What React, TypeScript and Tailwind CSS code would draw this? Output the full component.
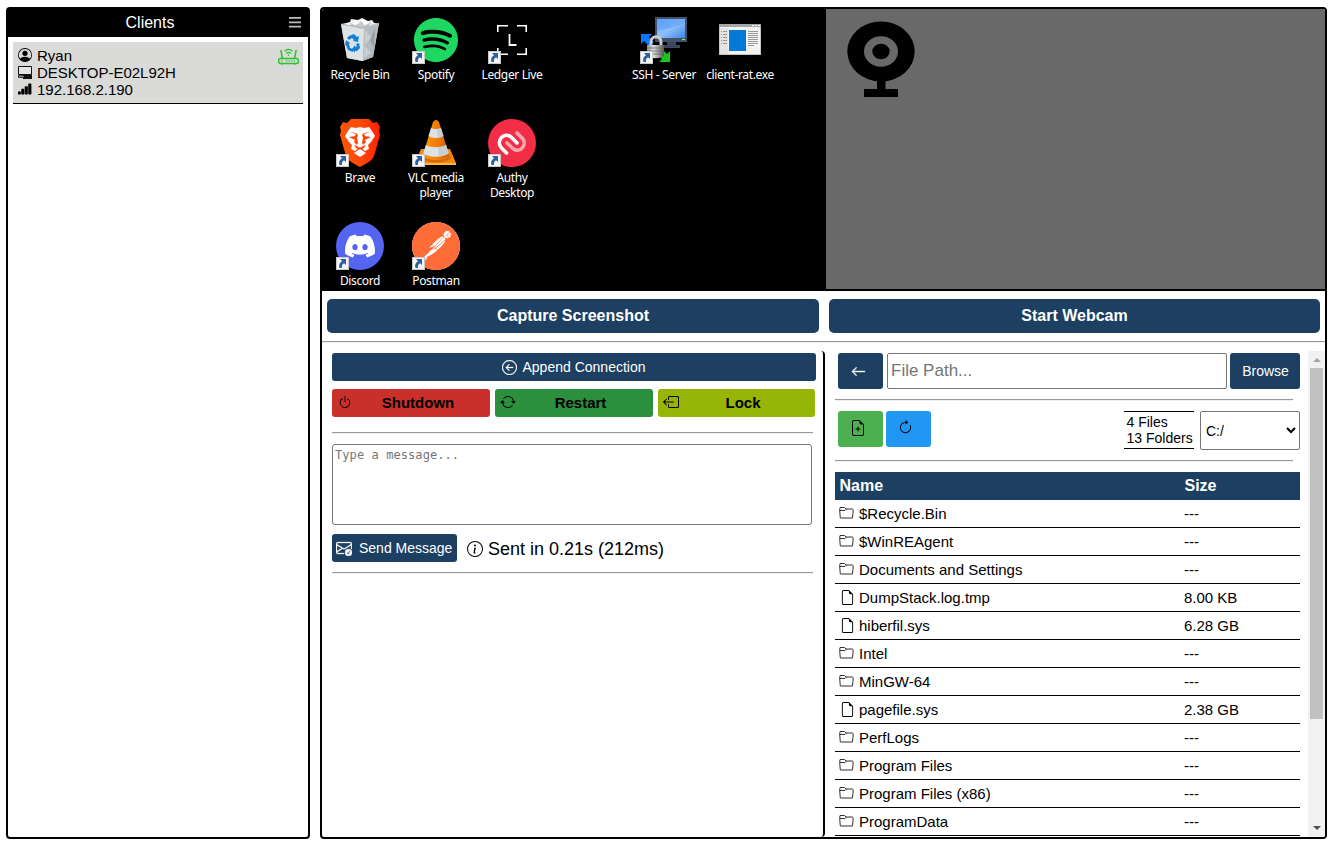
import React from 'react';
import {
  BsPersonCircle,
  BsReception4,
  BsPower,
  BsArrowRepeat,
  BsArrowLeftCircle,
  BsBoxArrowLeft,
  BsArrowLeft,
  BsFileEarmarkPlus,
  BsArrowClockwise,
  BsFileEarmark,
  BsInfoCircle,
  BsEnvelopeCheck,
} from 'react-icons/bs';
import { SiSpotify, SiPostman, SiDiscord } from 'react-icons/si';

const files: { name: string; size?: string }[] = [
  { name: '$Recycle.Bin' },
  { name: '$WinREAgent' },
  { name: 'Documents and Settings' },
  { name: 'DumpStack.log.tmp', size: '8.00 KB' },
  { name: 'hiberfil.sys', size: '6.28 GB' },
  { name: 'Intel' },
  { name: 'MinGW-64' },
  { name: 'pagefile.sys', size: '2.38 GB' },
  { name: 'PerfLogs' },
  { name: 'Program Files' },
  { name: 'Program Files (x86)' },
  { name: 'ProgramData' },
];

function RecycleBin() {
  return (
    <svg viewBox="0 0 48 48" className="size-12">
      <path d="M5 8 43 7 37 41 26 45 11 42Z" fill="#c9cdd0" />
      <path d="M5 8 28 12 27 45 11 42Z" fill="#dfe2e4" />
      <path d="M28 12 43 7 37 41 27 45Z" fill="#b4b9bd" />
      <path d="m29 14 7 8-8 7 7 8-7 5Z" fill="#c9cdd0" />
      <path d="m39 12-5 12 4 8Z" fill="#979da1" />
      <path d="m6 8 8-2 1-3 7 1 4-2 6 3 4-1 2 3 4 1-16 5Z" fill="#f4f5f6" />
      <path d="m14 7 6 2 5-4 4 4 6-3-2 5-8 2-10-3Z" fill="#c5cacd" />
      <path d="m19 4 5 3-6 2Zm8 0 6 3-5 2Z" fill="#fff" />
      <path d="m5 8 22 4 16-5" fill="none" stroke="#9fa4a8" strokeWidth=".8" />
      <g fill="#1080d8">
        <path d="m13 20 5-2 3 3 2-1-1 6-5-1 1-1-2-2-3 2-2-2Z" />
        <path d="m10 24 4 3-1 1 1 4 3 1v3l-5-2-2-5-1 0Z" />
        <path d="m23 27 1 5-3 3-2 0v2l-3-4 3-4v2l2-1-1-2Z" />
      </g>
    </svg>
  );
}

function Spotify() {
  return (
    <span className="flex size-12 items-center justify-center">
      <span className="flex size-11 rounded-full bg-black">
        <SiSpotify className="size-11 text-[#1ed760]" />
      </span>
    </span>
  );
}

function Ledger() {
  return (
    <svg viewBox="0 0 48 48" className="size-12" fill="none" stroke="#fff" strokeWidth="1.6">
      <path d="M20 9.700H9.800V16M29 9.700h9.200V16M9.800 32v6.200H20M38.200 32v6.200H29" />
      <path d="M21.500 18v11h7" strokeWidth="1.800" />
    </svg>
  );
}

function SshServer() {
  return (
    <svg viewBox="0 0 48 48" className="size-12">
      <defs>
        <linearGradient id="screen" x1="0" y1="0" x2="1" y2="1">
          <stop offset="0" stopColor="#5da2f7" />
          <stop offset=".5" stopColor="#8fc0ff" />
          <stop offset="1" stopColor="#3c85e6" />
        </linearGradient>
        <linearGradient id="lock" x1="0" y1="0" x2="1" y2="0">
          <stop offset="0" stopColor="#999" />
          <stop offset=".4" stopColor="#ddd" />
          <stop offset="1" stopColor="#555" />
        </linearGradient>
      </defs>
      <path d="M15 1h32v25H15Z" fill="#44536b" />
      <path d="M17 3h28v19H17Z" fill="url(#screen)" />
      <path d="M17 14c12-1 20-4 28-7V3H17Z" fill="#5c9ff5" opacity=".6" />
      <path d="M27 26h9v3h4v3H23v-3h4Z" fill="#394759" />
      <path d="M42 23h3v1h-3Z" fill="#9ee65b" />
      <path d="M1 18h11l-3 3 5 5-5 4-5-5-3 3Z" fill="#0878ff" />
      <path d="M30 46H19l3-3-4-4 5-5 4 4 3-3Z" fill="#16c51d" />
      <path d="M11 31v-5c0-7 10-7 10 0v5" fill="none" stroke="#ccc" strokeWidth="3" />
      <path d="M7 29h17v11c-4 3-13 3-17 0Z" fill="url(#lock)" />
      <path d="M7 32h17M7 35h17M7 38h17" stroke="#666" strokeWidth=".8" />
    </svg>
  );
}

function ClientExe() {
  return (
    <svg viewBox="0 0 48 48" className="size-12">
      <path d="M3 8h42v31H3Z" fill="#c3c3c3" />
      <path d="M4 11h40v27H4Z" fill="#f3f3f3" />
      <path d="M3 8h42v3H3Z" fill="#a7a7a7" />
      <path d="M36 9h2v1h-2Zm3 0h2v1h-2Zm3 0h2v1h-2Z" fill="#fff" />
      <path d="M4 12h8v26H4Z" fill="#e4e4e4" />
      <path d="M13 14h17v21H13Z" fill="#0579d7" />
      <path d="M5 15.500h1m1 0h4M5 18.500h1m1 0h4M5 21.500h1m1 0h4M5 24.500h1m1 0h4M5 27.500h1m1 0h4" stroke="#999" />
      <path d="M32 15.500h10M32 17.500h10M32 19.500h10M32 21.500h10M32 23.500h10M32 25.500h10M32 27.500h10M32 29.500h6" stroke="#999" />
    </svg>
  );
}

function Brave() {
  return (
    <svg viewBox="0 0 48 48" className="size-12">
      <defs>
        <linearGradient id="brave" x1="0" x2="1">
          <stop offset="0" stopColor="#ff5500" />
          <stop offset=".5" stopColor="#ff4a0a" />
          <stop offset="1" stopColor="#ff2000" />
        </linearGradient>
      </defs>
      <path d="M15 0h18l4 4 4-1 3 5-1 4 1 4-6 21c-1 4-8 8-14 11-6-3-13-7-14-11L4 16l1-4-1-4 3-5 4 1Z" fill="url(#brave)" />
      <path
        d="m15 8 5 1 4-1 4 1 5-1 3 4 3 5-4 6-3 3 1 4-4 2-5-4-5 4-4-2 1-4-3-3-4-6 3-5Z"
        fill="#fff"
      />
      <path d="m13 13 7 1 2 2-1 3 1 5-1 2-3-3 1-2-6-3 6-1 1-2ZM35 13l-7 1-2 2 1 3-1 5 1 2 3-3-1-2 6-3-6-1-1-2ZM18 26l3 1 3 2 3-2 3-1-2 3-4 2-4-2Z" fill="#ff4510" />
      <path d="m18 34 6-4 6 4-6 4Z" fill="#fff" />
    </svg>
  );
}

function Vlc() {
  return (
    <svg viewBox="0 0 48 48" className="size-12">
      <defs>
        <linearGradient id="cone" x1="0" x2="1">
          <stop offset="0" stopColor="#ff9a13" />
          <stop offset=".45" stopColor="#f58202" />
          <stop offset="1" stopColor="#d85d00" />
        </linearGradient>
      </defs>
      <path d="M9 30h29l6 14v2H3v-2Z" fill="#f28a10" />
      <path d="M3 44h41v2H3Z" fill="#ffb43b" />
      <path d="M11 35c2 8 25 8 27 0l1 4c-4 6-25 6-29 0Z" fill="#b95000" opacity=".55" />
      <path d="M21 3q3-4 6 0l10 33c-1 6-25 6-26 0Z" fill="url(#cone)" />
      <path d="M19 9c3 1.500 7 1.500 10 0l2.500 8c-3 2.500-12 2.500-15 0Z" fill="#dde2e5" />
      <path d="M13.800 26c4 3 16 3 20.400 0l2.500 8c-5 5-21 5-25.400 0Z" fill="#dde2e5" />
      <path d="M25 10 29 9l2.500 8-5.500 2ZM26 28l8-2 2.700 8-9.700 4Z" fill="#b9c0c4" opacity=".6" />
    </svg>
  );
}

function Authy() {
  return (
    <svg viewBox="0 0 48 48" className="size-12">
      <circle cx="24" cy="24" r="24" fill="#f22e46" />
      <g fill="none" strokeWidth="3.600" strokeLinecap="round" strokeLinejoin="round">
        <path d="m29 14 5.500 5.500c5 6-2 15-9 10.500L19 24" stroke="#f9a6af" />
        <path d="m18.500 34-5-5c-6-7 2-16 9-11.500L29 24" stroke="#fff" />
      </g>
    </svg>
  );
}

function Discord() {
  return (
    <span className="flex size-12 items-center justify-center rounded-full bg-[#5664f2]">
      <SiDiscord className="size-[30px] text-white" />
    </span>
  );
}

function Postman() {
  return (
    <span className="flex size-12 rounded-full bg-white">
      <SiPostman className="size-12 text-[#ff6c37]" />
    </span>
  );
}

function ShortcutBadge() {
  return (
    <svg viewBox="0 0 13 13" className="absolute bottom-0 left-0 size-[13px]">
      <path d="M0 0h13v13H0Z" fill="#c9c9c9" />
      <path d="M1 1h11v11H1Z" fill="#f6f6f6" />
      <path d="M4 2h6v6L8 6.300C6 7.500 5.700 9 6 11H3.500C2.500 8 3.500 5.700 6 4.200Z" fill="#2e5f9e" />
    </svg>
  );
}

const desktop: { label: string; icon?: () => React.JSX.Element; shortcut?: boolean }[] = [
  { label: 'Recycle Bin', icon: RecycleBin },
  { label: 'Spotify', icon: Spotify, shortcut: true },
  { label: 'Ledger Live', icon: Ledger, shortcut: true },
  { label: '' },
  { label: 'SSH - Server', icon: SshServer, shortcut: true },
  { label: 'client-rat.exe', icon: ClientExe },
  { label: 'Brave', icon: Brave, shortcut: true },
  { label: 'VLC media player', icon: Vlc, shortcut: true },
  { label: 'Authy Desktop', icon: Authy, shortcut: true },
  { label: '' },
  { label: '' },
  { label: '' },
  { label: 'Discord', icon: Discord, shortcut: true },
  { label: 'Postman', icon: Postman, shortcut: true },
];

function Desktop() {
  return (
    <div className="grid w-[504px] shrink-0 auto-rows-[103px] grid-cols-[repeat(6,76px)] overflow-hidden bg-black">
      {desktop.map(({ label, icon: Icon, shortcut }, i) => (
        <div key={i} className="flex flex-col items-center pt-[7px]">
          {Icon && (
            <div className="relative size-12">
              <Icon />
              {shortcut && <ShortcutBadge />}
            </div>
          )}
          <span className="mt-[3px] text-center font-['Noto_Sans',sans-serif] text-[12px] leading-[15px] tracking-[-0.36px] text-white">
            {label}
          </span>
        </div>
      ))}
    </div>
  );
}

function Webcam() {
  return (
    <div className="flex-1 bg-[#696969] pl-[21px] pt-3">
      <svg viewBox="0 0 68 76" className="h-[76px] w-[68px]">
        <ellipse cx="34" cy="30.500" rx="33.700" ry="30" />
        <ellipse cx="34" cy="30.500" rx="17" ry="15.200" fill="#696969" />
        <ellipse cx="34" cy="30.500" rx="8.700" ry="7.800" />
        <path d="M30 58h8.500v10H51v8H17v-8h13Z" />
      </svg>
    </div>
  );
}

function Computer() {
  return (
    <svg viewBox="0 0 14 14" className="size-[14px]">
      <path d="M.5.5h13v8H.5Z" fill="#e4e4e4" stroke="#111" />
      <path d="M0 9h9v3H0Z" fill="#444" />
      <path d="M5 9h9v4H5Z" fill="#111" />
      <path d="M1 10.500h5" stroke="#888" />
    </svg>
  );
}

function Router() {
  return (
    <svg viewBox="0 0 21 17" className="mt-px h-[17px] w-[21px]" fill="none" stroke="#28c32d">
      <rect x=".7" y="10.500" width="19.600" height="5" rx="1.500" strokeWidth="1.400" />
      <path d="M4.500 10.500 2.800 2M16.500 10.500 18.200 2" strokeWidth="1.500" />
      <path d="M6.500 3.500C8.500.700 12.500.700 14.500 3.500M8.300 5.500c1.300-1.600 3.100-1.600 4.400 0" strokeWidth="1.200" />
      <path d="M10.500 6.500v1.500M3 13h1.500M8 13h1.500M10.500 13H12M13 13h1.500M15.500 13H17M3.500 16.500h1M16.500 16.500h1" strokeWidth="1.100" />
    </svg>
  );
}

function Folder() {
  return (
    <svg viewBox="0 0 15 12" className="mr-px mb-px h-3 w-[15px] shrink-0" fill="none" stroke="#333">
      <path d="M.7 3.500 1 .5h4.600l1.400 1.500h6.200c.6 0 1 .4 1 1L13.500 11H1.300L.7 3.500h5.300L7.500 2" />
    </svg>
  );
}

function Rule({ className = '' }: { className?: string }) {
  return <div className={`h-0.5 shrink-0 border-t border-b border-t-[#9a9a9a] border-b-[#eeeeee] ${className}`} />;
}

export default function App() {
  return (
    <div className="flex h-[844px] w-[1333px] gap-2.5 overflow-hidden bg-white pt-[7px] pr-1.5 pb-[5px] pl-1.5 font-['Liberation_Sans',Arial,sans-serif] text-black">
      <aside className="flex w-[304px] shrink-0 flex-col rounded border-2 border-black">
        <header className="flex h-7 items-center bg-black pr-[7px] text-base text-white">
          <span className="flex-1 pl-[3px] text-center">Clients</span>
          <svg viewBox="0 0 12 11" className="mb-0.5 h-[11px] w-3" fill="#bdbdbd">
            <path d="M0 0h12v1.800H0ZM0 4.400h12v1.800H0ZM0 8.800h12v1.800H0Z" />
          </svg>
        </header>
        <div className="mx-[5px] mt-[5px] flex h-[62px] justify-between border-b border-black bg-[#dadad8] pt-[5px] pr-1 pl-[5px] text-[15px] leading-[17px]">
          <div>
            <div className="flex items-center gap-[5px]"><BsPersonCircle className="mb-px size-[14px]" />Ryan</div>
            <div className="flex items-center gap-[5px]"><Computer />DESKTOP-E02L92H</div>
            <div className="flex items-center gap-[5px]"><BsReception4 className="mb-0.5 size-[14px]" strokeWidth=".6" stroke="black" />192.168.2.190</div>
          </div>
          <Router />
        </div>
      </aside>

      <main className="flex w-[1007px] shrink-0 flex-col overflow-hidden rounded border-2 border-black">
        <section className="flex h-[282px] shrink-0 overflow-hidden border-b-2 border-black">
          <Desktop />
          <Webcam />
        </section>
        <div className="flex h-[50px] shrink-0 gap-2.5 px-[5px] pt-2">
          <button className="h-[34px] w-[492px] rounded-[5px] bg-[#1c3f62] text-base font-bold text-white">Capture Screenshot</button>
          <button className="h-[34px] w-[491px] rounded-[5px] bg-[#1c3f62] text-base font-bold text-white">Start Webcam</button>
        </div>
        <Rule />
        <div className="mt-2 flex min-h-0 flex-1">
          <section className="flex w-[503px] shrink-0 flex-col rounded-r border-r-2 border-black pt-0.5 pl-2.5">
            <button className="flex h-7 w-[484px] items-center justify-center gap-1.5 rounded-[3px] bg-[#1c3f62] pr-px text-sm text-white">
              <BsArrowLeftCircle className="size-[15px]" strokeWidth=".3" />Append Connection
            </button>
            <div className="mt-2 flex gap-[5px] text-[15px] font-bold">
              <button className="flex h-7 w-[158px] items-center rounded-[3px] bg-[#c9302c] pl-1.5">
                <BsPower className="mb-0.5 size-[14px]" /><span className="flex-1 pr-1.5 text-center">Shutdown</span>
              </button>
              <button className="flex h-7 w-[158px] items-center rounded-[3px] bg-[#2c8f3e] pl-[5px]">
                <BsArrowRepeat className="mb-0.5 size-4" /><span className="flex-1 pr-2 text-center">Restart</span>
              </button>
              <button className="flex h-7 w-[157px] items-center rounded-[3px] bg-[#96b505] pl-[5px]">
                <BsBoxArrowLeft className="mb-0.5 size-4" /><span className="flex-1 pr-[9px] pl-px text-center">Lock</span>
              </button>
            </div>
            <Rule className="mt-[15px] w-[481px]" />
            <textarea
              placeholder="Type a message..."
              className="mt-2.5 block h-[81px] w-[480px] shrink-0 resize-none rounded-[3px] border border-[#767676] px-0.5 pt-0.5 font-['DejaVu_Sans_Mono',monospace] text-xs tracking-[0.080px] placeholder:text-[#757575]"
            />
            <div className="mt-[9px] flex h-7 items-center">
              <button className="flex h-7 w-[125px] items-center gap-[7px] rounded-[3px] bg-[#1c3f62] pl-1 text-sm whitespace-nowrap text-white">
                <BsEnvelopeCheck className="size-4" strokeWidth=".3" />Send Message
              </button>
              <BsInfoCircle className="mt-px ml-2.5 size-4" />
              <span className="ml-[5px] pt-0.5 text-lg leading-[27px]">Sent in 0.21s (212ms)</span>
            </div>
            <Rule className="mt-2.5 w-[481px]" />
          </section>

          <section className="flex min-w-0 flex-1 flex-col overflow-hidden pt-0.5 pl-2.5">
            <div className="flex pl-[3px]">
              <button className="flex h-9 w-[45px] items-center justify-center rounded-[3px] bg-[#1c3f62] pr-[5px] text-white"><BsArrowLeft className="size-[15px]" strokeWidth=".5" /></button>
              <input placeholder="File Path..." className="ml-1 h-9 w-[340px] rounded-[2px] border border-[#767676] px-[3px] text-[17px] placeholder:text-[#757575]" />
              <button className="ml-[3px] h-9 w-[70px] rounded-[3px] bg-[#1c3f62] pl-px text-sm text-white">Browse</button>
            </div>
            <Rule className="mt-2.5 w-[458px]" />
            <div className="mt-2.5 flex h-[39px] pl-[3px]">
              <button className="flex h-9 w-[45px] items-center justify-center rounded-[3px] bg-[#4caf50] pr-1.5 pb-0.5"><BsFileEarmarkPlus className="size-4" /></button>
              <button className="ml-[3px] flex h-9 w-[45px] items-center justify-center rounded-[3px] bg-[#2196f3] pr-1.5 pb-[3px]"><BsArrowClockwise className="size-[15px]" /></button>
              <div className="ml-[193px] h-[38px] w-[70px] border-y border-black pt-0.5 pl-[2.500px] text-sm leading-4 whitespace-nowrap">
                4 Files<br />13 Folders
              </div>
              <select className="ml-1.5 h-[39px] w-[100px] rounded-[2px] border border-[#767676] pl-px text-sm"><option>C:/</option></select>
            </div>
            <Rule className="mt-2.5 w-[458px]" />
            <div className="mt-2.5 flex h-7 w-[465px] shrink-0 items-center bg-[#1c3f62] pl-[4.500px] text-base font-bold text-white">
              <span className="w-[345px]">Name</span><span>Size</span>
            </div>
            {files.map(({ name, size }) => (
              <div key={name} className="flex h-7 w-[465px] shrink-0 items-center border-b border-black pl-1 text-[15px]">
                <span className="flex w-4 justify-center">{size ? <BsFileEarmark className="size-[15px]" /> : <Folder />}</span>
                <span className="ml-1 w-[325px] pt-px leading-[22px]">{name}</span>
                <span className="pt-px leading-[22px]">{size ?? '---'}</span>
              </div>
            ))}
          </section>
          <div className="flex w-[17px] shrink-0 flex-col items-center bg-[#f1f1f1]">
            <div className="flex h-[17px] items-center"><svg viewBox="0 0 8 4" className="h-1 w-2" fill="#a3a3a3"><path d="m0 4 4-4 4 4Z" /></svg></div>
            <div className="h-[351px] w-[13px] bg-[#c1c1c1]" />
            <div className="flex flex-1 items-end pb-[7px]"><svg viewBox="0 0 8 4" className="h-1 w-2" fill="#505050"><path d="m0 0 4 4 4-4Z" /></svg></div>
          </div>
        </div>
      </main>
    </div>
  );
}
